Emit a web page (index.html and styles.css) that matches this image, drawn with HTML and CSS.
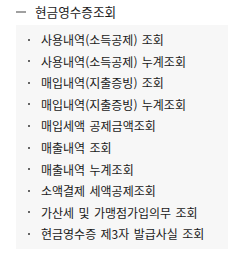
FILE: index.html
```html
<!DOCTYPE html>
<html lang="ko">
<head>
<meta charset="utf-8">
<link rel="stylesheet" href="styles.css">
</head>
<body>
<div class="menu">
  <div class="menu-head">
    <span class="dash"></span>
    <span class="head-text">현금영수증조회</span>
  </div>
  <ul class="sub">
    <li>사용내역(소득공제) 조회</li>
    <li>사용내역(소득공제) 누계조회</li>
    <li>매입내역(지출증빙) 조회</li>
    <li>매입내역(지출증빙) 누계조회</li>
    <li>매입세액 공제금액조회</li>
    <li>매출내역 조회</li>
    <li>매출내역 누계조회</li>
    <li>소액결제 세액공제조회</li>
    <li>가산세 및 가맹점가입의무 조회</li>
    <li>현금영수증 제3자 발급사실 조회</li>
  </ul>
</div>
</body>
</html>
```
FILE: styles.css
```css
html, body {
  margin: 0;
  padding: 0;
  background: #ffffff;
}
body {
  font-family: "Noto Sans CJK KR", "Noto Sans", sans-serif;
  color: #1a1a1a;
}
.menu {
  width: 228px;
}
.menu-head {
  display: flex;
  align-items: center;
  height: 25px;
  padding-left: 16px;
  box-sizing: border-box;
}
.dash {
  width: 10px;
  height: 2px;
  background: #a0a0a0;
  margin-right: 9px;
  margin-top: -1px;
  flex: none;
}
.head-text {
  font-size: 12.6px;
  line-height: 25px;
  white-space: nowrap;
  position: relative;
  top: -1px;
}
.sub {
  list-style: none;
  margin: 0 0 0 16px;
  padding: 4px 0 5px 0;
  background: #f7f7f7;
}
.sub li {
  display: flex;
  align-items: center;
  height: 21.55px;
  padding-left: 12px;
  font-size: 12px;
  word-spacing: 1px;
  color: #1a1a1a;
  white-space: pre;
}
.sub li::before {
  content: "";
  width: 2px;
  height: 2px;
  background: #666666;
  margin-right: 11px;
  flex: none;
}
```
